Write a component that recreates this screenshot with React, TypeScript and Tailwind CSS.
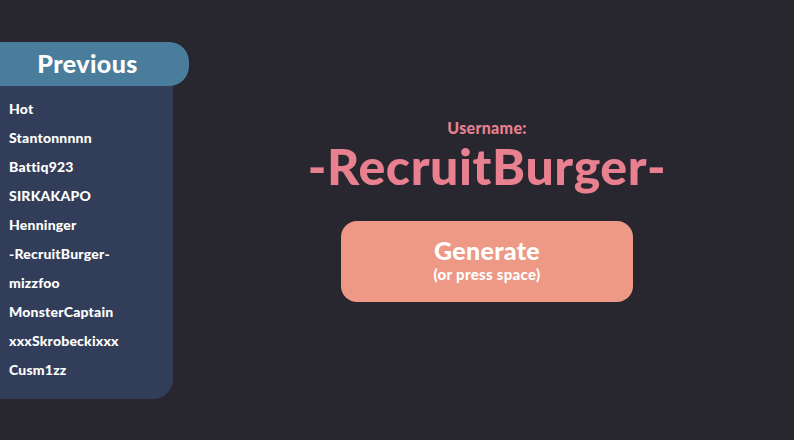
import React from "react";

const names = [
  "Hot",
  "Stantonnnnn",
  "Battiq923",
  "SIRKAKAPO",
  "Henninger",
  "-RecruitBurger-",
  "mizzfoo",
  "MonsterCaptain",
  "xxxSkrobeckixxx",
  "Cusm1zz",
];

export default function App() {
  return (
    <div
      className="w-[794px] h-[440px] bg-[#28272f] flex overflow-hidden"
      style={{ fontFamily: "Lato, 'Open Sans', sans-serif" }}
    >
      <div className="pt-[42px] w-[190px] shrink-0">
        <div className="w-[189px] h-[44px] bg-[#4a7d9b] rounded-r-[20px] flex items-center justify-center pr-[14px]">
          <span className="text-white text-[25px] font-black tracking-[0.4px]">Previous</span>
        </div>
        <div className="w-[173px] h-[313px] bg-[#323e59] rounded-br-[20px] pt-[13px] pl-[9px] flex flex-col gap-[10px]">
          {names.map((n) => (
            <div key={n} className="text-white text-[14px] font-black leading-[19px] tracking-[0.2px]">
              {n}
            </div>
          ))}
        </div>
      </div>
      <div className="flex-1 flex flex-col items-center pt-[118px] pr-[10px]">
        <div className="text-[#e8808f] text-[16px] font-black leading-[20px] tracking-[0.3px]">Username:</div>
        <div className="text-[#e8808f] text-[50px] font-black leading-[56px] tracking-[0.6px]">
          -RecruitBurger-
        </div>
        <button className="mt-[27px] w-[292px] h-[81px] bg-[#ee9886] rounded-[16px] flex flex-col items-center justify-center pb-[5px] text-white">
          <span className="text-[25px] font-black leading-[29px] tracking-[0.3px]">Generate</span>
          <span className="text-[15px] font-black leading-[18px] tracking-[0.3px]">(or press space)</span>
        </button>
      </div>
    </div>
  );
}
